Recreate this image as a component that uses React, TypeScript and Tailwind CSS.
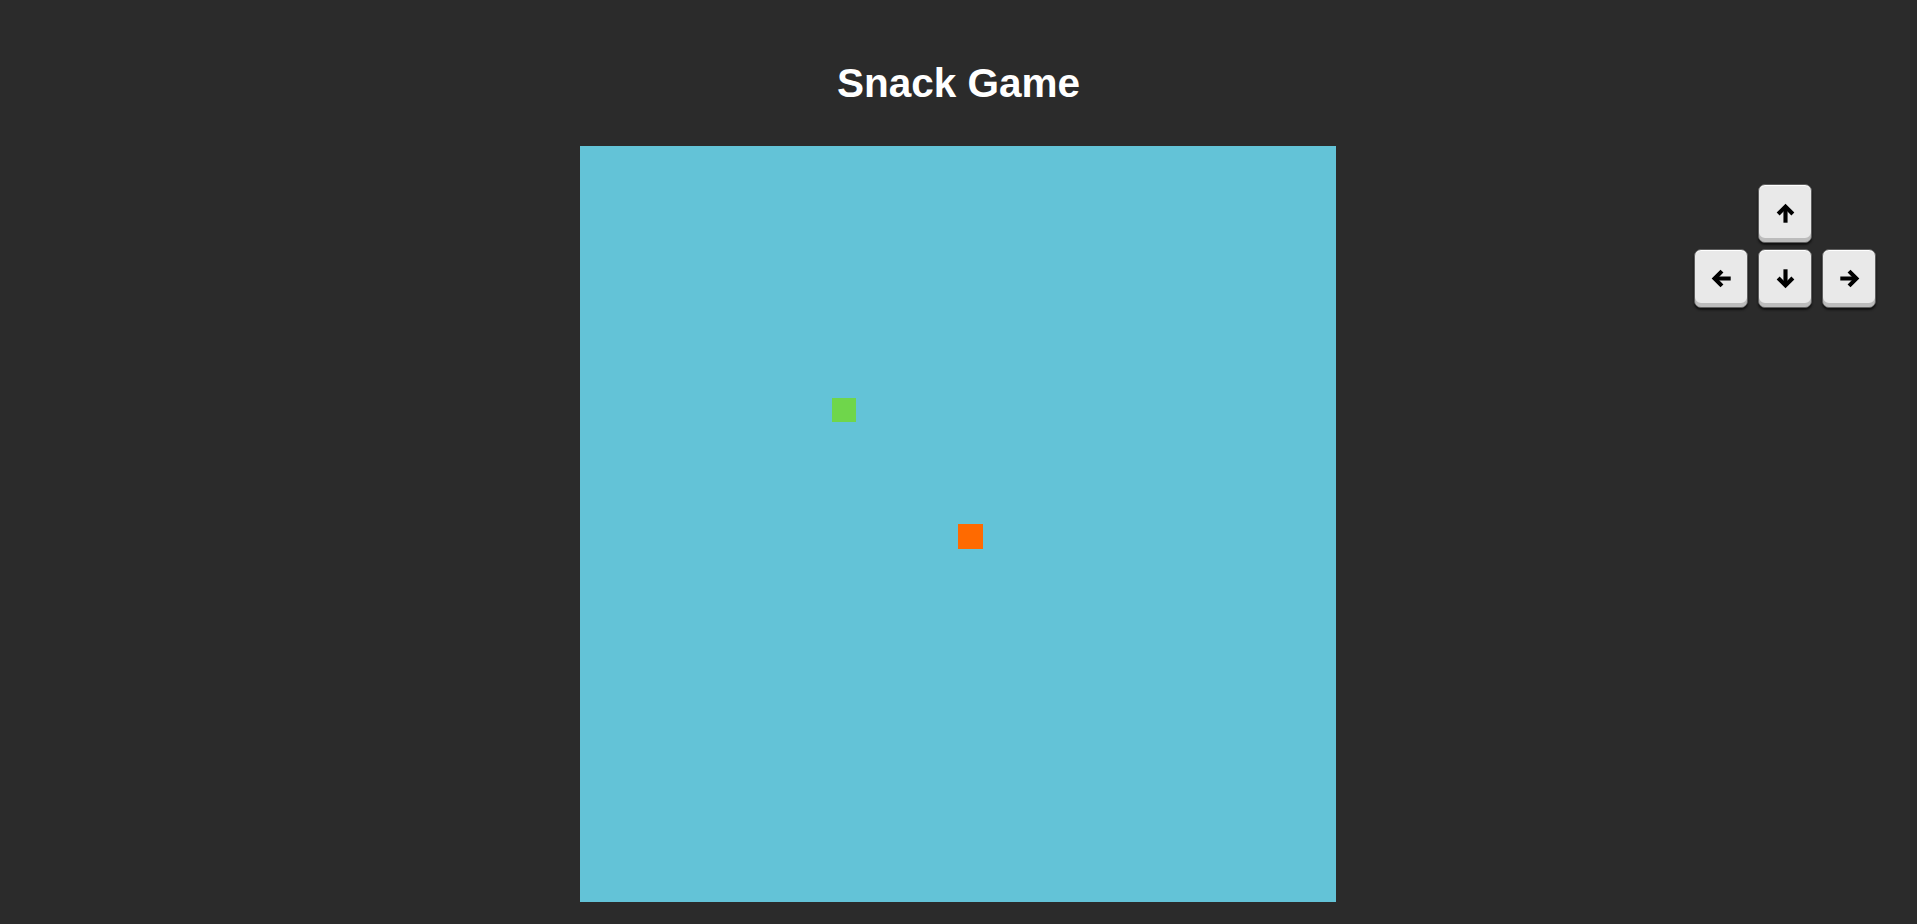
const CELL = 25.2;

function Arrow({ rotate }: { rotate: string }) {
  return (
    <svg width="23" height="23" viewBox="0 0 20 20" className={rotate} fill="none" stroke="#000" strokeWidth={3.6} strokeLinejoin="miter" strokeLinecap="butt">
      <path d="M10 18V4.5" />
      <path d="M3.6 10.4 10 4 16.4 10.4" />
    </svg>
  );
}

function Key({ children }: { children: React.ReactNode }) {
  return (
    <button className="w-[54px] h-[59px] rounded-[7px] bg-[#e9e9e9] border border-[#5e5e5e] shadow-[inset_0_-4px_0_#bcbcbc,inset_0_1px_0_#ffffff,0_2px_2px_#111] flex items-center justify-center text-black">
      {children}
    </button>
  );
}

export default function App() {
  const snake = { x: 10, y: 10 };
  const food = { x: 15, y: 15 };

  return (
    <div className="min-h-screen bg-[#2b2b2b] font-['Liberation_Sans',Arial,sans-serif] relative">
      <h1 className="pt-[60px] text-center text-white text-[40.5px] font-bold leading-[46px]">Snack Game</h1>

      <div className="mt-[40px] ml-[580px] w-[756px] h-[756px] bg-[#63c3d7] relative">
        <div
          className="absolute w-[24px] h-[24px] bg-[#6fd64b]"
          style={{ left: snake.x * CELL, top: snake.y * CELL }}
        />
        <div
          className="absolute w-[25px] h-[25px] bg-[#ff6a00]"
          style={{ left: food.x * CELL, top: food.y * CELL }}
        />
      </div>

      {/* arrow pad */}
      <div className="absolute top-[184px] right-[41px] flex flex-col items-center gap-[6px]">
        <Key><Arrow rotate="" /></Key>
        <div className="flex gap-[10px]">
          <Key><Arrow rotate="-rotate-90" /></Key>
          <Key><Arrow rotate="rotate-180" /></Key>
          <Key><Arrow rotate="rotate-90" /></Key>
        </div>
      </div>
    </div>
  );
}
